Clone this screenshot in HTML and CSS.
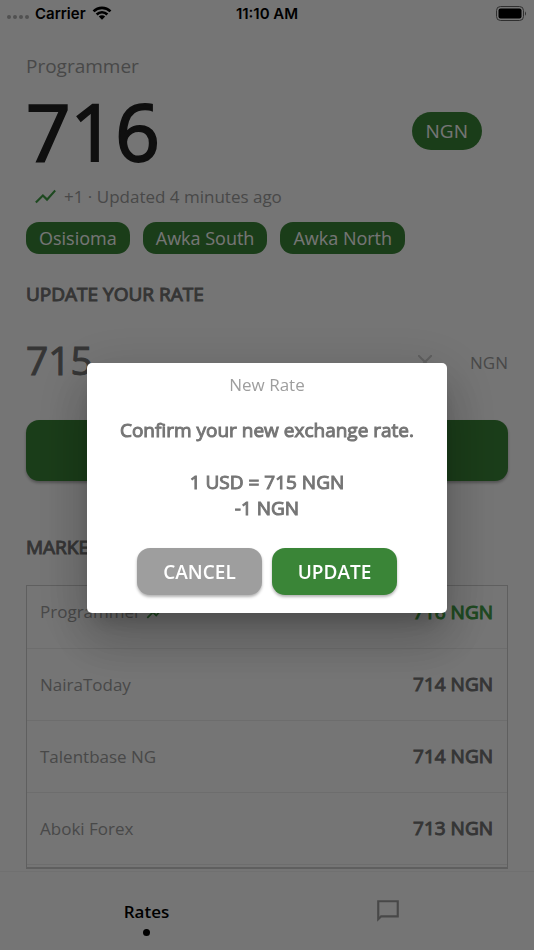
FILE: index.html
```html
<!DOCTYPE html>
<html lang="en">
<head>
    <meta charset="utf-8">
    <meta name="viewport" content="width=device-width, initial-scale=1">
    <title>Rates</title>
    <link rel="stylesheet" href="styles.css">
</head>
<body>
    <div class="app">
        <header class="status-bar">
            <div class="carrier">
                <svg class="signal" viewBox="0 0 22 4" aria-hidden="true">
                    <circle cx="2" cy="2" r="2"/>
                    <circle cx="8" cy="2" r="2"/>
                    <circle cx="14" cy="2" r="2"/>
                    <circle cx="20" cy="2" r="2"/>
                </svg>
                <span>Carrier</span>
                <svg class="wifi" viewBox="0 0 20 14" aria-hidden="true">
                    <path d="M0.6 4.4a13.4 13.4 0 0 1 18.8 0l-1.9 1.9a10.7 10.7 0 0 0-15 0z"/>
                    <path d="M3.7 7.5a9 9 0 0 1 12.6 0l-1.9 1.9a6.3 6.3 0 0 0-8.8 0z"/>
                    <path d="M6.8 10.6a4.6 4.6 0 0 1 6.4 0L10 13.8z"/>
                </svg>
            </div>
            <span>11:10 AM</span>
            <svg class="battery" viewBox="0 0 31 15" aria-hidden="true">
                <rect class="battery-case" x="0.5" y="0.5" width="27" height="14" rx="4"/>
                <rect x="2.5" y="2.5" width="23" height="10" rx="2"/>
                <path class="battery-tip" d="M29 5.2q2 2.3 0 4.6z"/>
            </svg>
        </header>

        <main>
            <section class="current">
                <p class="source">Programmer</p>
                <div class="rate-row">
                    <span class="rate">716</span>
                    <span class="currency-pill">NGN</span>
                </div>
                <p class="change">
                    <svg class="trend" viewBox="0 0 24 24" aria-hidden="true"><path d="M3.5 18.49l6-6.01 4 4L22 6.92l-1.41-1.41-7.09 7.97-4-4L2 16.99z"/></svg>
                    +1 · Updated 4 minutes ago
                </p>
                <div class="tags">
                    <span class="tag">Osisioma</span>
                    <span class="tag">Awka South</span>
                    <span class="tag">Awka North</span>
                </div>
            </section>

            <section class="update">
                <h2><label for="newRate">UPDATE YOUR RATE</label></h2>
                <div class="rate-field">
                    <input type="text" id="newRate" value="715">
                    <button class="clear" type="button" aria-label="Clear">
                        <svg viewBox="0 0 14 14"><path d="M0 0l14 14M14 0L0 14"/></svg>
                    </button>
                    <span>NGN</span>
                </div>
                <button class="submit" type="button">UPDATE</button>
            </section>

            <section class="market">
                <h2>MARKET RATES</h2>
                <div class="market-list">
                    <table>
                        <tr class="own">
                            <th scope="row">Programmer
                                <svg class="trend" viewBox="0 0 24 24" aria-hidden="true"><path d="M3.5 18.49l6-6.01 4 4L22 6.92l-1.41-1.41-7.09 7.97-4-4L2 16.99z"/></svg>
                            </th>
                            <td>716 NGN</td>
                        </tr>
                        <tr>
                            <th scope="row">NairaToday</th>
                            <td>714 NGN</td>
                        </tr>
                        <tr>
                            <th scope="row">Talentbase NG</th>
                            <td>714 NGN</td>
                        </tr>
                        <tr>
                            <th scope="row">Aboki Forex</th>
                            <td>713 NGN</td>
                        </tr>
                    </table>
                </div>
            </section>
        </main>

        <nav class="tabs">
            <a class="active" href="#rates">Rates</a>
            <a href="#chat" aria-label="Chat">
                <svg class="chat" viewBox="0 0 24 24"><path d="M22 2H2v20l4-4h16V2zM4 4h16v12H5.2L4 17.2z" fill-rule="evenodd"/></svg>
            </a>
        </nav>
    </div>

    <div class="overlay">
        <div class="dialog" role="dialog" aria-modal="true" aria-labelledby="dialogTitle">
            <h3 id="dialogTitle">New Rate</h3>
            <p>Confirm your new exchange rate.</p>
            <p>1 USD = 715 NGN<br>-1 NGN</p>
            <div class="actions">
                <button class="cancel" type="button">CANCEL</button>
                <button class="confirm" type="button">UPDATE</button>
            </div>
        </div>
    </div>
</body>
</html>
```

FILE: styles.css
```css
* {
    box-sizing: border-box;
}
body {
    margin: 0;
    font-family: "Open Sans", sans-serif;
    font-size: 19px;
    color: #757575;
    background-color: white;
}
h2, h3, p {
    margin: 0;
    font-weight: normal;
}
button {
    border: none;
    padding: 0;
    font: inherit;
    color: white;
    cursor: pointer;
}
/* slightly heavier than regular */
h2, td, .dialog p, .rate-field input {
    -webkit-text-stroke: 1px;
}
.app {
    display: flex;
    flex-direction: column;
    height: 100vh;
}

/* status bar */
.status-bar {
    display: grid;
    grid-template-columns: 1fr auto 1fr;
    align-items: center;
    height: 26px;
    padding: 0 7px;
    font-family: Inter, sans-serif;
    font-size: 15px;
    font-weight: 600;
    color: black;
}
.carrier {
    display: flex;
    align-items: center;
    gap: 6px;
}
.signal {
    width: 22px;
    height: 4px;
    margin-top: 8px;
    fill: #b0b0b0;
}
.wifi {
    width: 20px;
    height: 14px;
}
.battery {
    width: 31px;
    height: 15px;
    justify-self: end;
}
.battery-case {
    fill: none;
    stroke: #666;
}
.battery-tip {
    fill: #666;
}

main {
    flex: 1;
    display: flex;
    flex-direction: column;
    min-height: 0;
    padding: 24px 26px 2px;
}

/* current rate */
.source {
    line-height: 32px;
    color: #9e9e9e;
}
.rate-row {
    display: flex;
    justify-content: space-between;
    align-items: center;
    height: 98px;
    padding-right: 26px;
}
.rate {
    font-size: 78px;
    line-height: 98px;
    color: #212121;
    -webkit-text-stroke: 2px;
}
.currency-pill {
    padding: 0 14px;
    border-radius: 20px;
    line-height: 38px;
    color: white;
    background-color: #3a8537;
}
.change {
    display: flex;
    align-items: center;
    gap: 6px;
    height: 32px;
    padding-left: 7px;
    font-size: 17px;
    color: #9e9e9e;
}
.trend {
    width: 25px;
    height: 25px;
    fill: #43a047;
}
.tags {
    display: flex;
    gap: 13px;
    margin-top: 10px;
}
.tag {
    padding: 0 13px;
    border-radius: 13px;
    font-size: 18px;
    line-height: 32px;
    color: white;
    background-color: #3a8537;
}

/* update form */
h2 {
    font-size: 19px;
    line-height: 28px;
}
.update {
    margin-top: 26px;
}
.rate-field {
    display: flex;
    align-items: center;
    height: 60px;
    margin-top: 24px;
    font-size: 17px;
    color: #9e9e9e;
}
.rate-field input {
    flex: 1;
    min-width: 0;
    border: none;
    padding: 0 0 6px;
    outline: none;
    font: 39px "Open Sans", sans-serif;
    color: #757575;
    background: none;
}
.clear {
    width: 14px;
    height: 14px;
    margin-right: 38px;
    background: none;
}
.clear svg {
    display: block;
    fill: none;
    stroke: #d0d0d0;
    stroke-width: 2;
}
.submit {
    display: block;
    width: 100%;
    height: 61px;
    margin-top: 28px;
    border-radius: 13px;
    background-color: #3a8537;
    box-shadow: 0 2px 3px rgba(0,0,0,0.3);
}

/* market rates */
.market {
    flex: 1;
    display: flex;
    flex-direction: column;
    min-height: 0;
    margin-top: 52px;
}
.market-list {
    flex: 1;
    min-height: 0;
    margin-top: 24px;
    overflow: hidden;
    border: 1px solid #d0d0d0;
    border-bottom-width: 2px;
}
table {
    width: 100%;
    margin-top: -10px;
    border-collapse: collapse;
}
tr {
    height: 72px;
    border-bottom: 1px solid #ededed;
}
th, td {
    padding: 0 14px 0 13px;
}
th {
    font-size: 17px;
    font-weight: normal;
    text-align: left;
    color: #9e9e9e;
}
th .trend {
    width: 20px;
    height: 20px;
    vertical-align: middle;
}
td {
    text-align: right;
}
.own td {
    color: #43a047;
}

/* bottom tabs */
.tabs {
    display: flex;
    justify-content: center;
    height: 79px;
    border-top: 1px solid #f4f4f4;
}
.tabs a {
    display: flex;
    flex-direction: column;
    align-items: center;
    width: 241px;
    padding-top: 26px;
    font-size: 17px;
    line-height: 28px;
    color: #9e9e9e;
    text-decoration: none;
}
.tabs .active {
    font-weight: 600;
    color: black;
}
.active::after {
    content: "";
    width: 7px;
    height: 7px;
    margin-top: 3px;
    border-radius: 50%;
    background-color: black;
}
.chat {
    width: 26px;
    height: 26px;
    fill: #9e9e9e;
}

/* confirm dialog */
.overlay {
    position: fixed;
    inset: 0;
    display: flex;
    justify-content: center;
    align-items: center;
    padding-top: 26px;
    background-color: rgba(0,0,0,0.54);
}
.dialog {
    width: 360px;
    padding: 8px 13px 18px;
    border-radius: 5px;
    text-align: center;
    background-color: white;
    box-shadow: 0 14px 20px -8px rgba(0,0,0,0.2), 0 30px 48px 4px rgba(0,0,0,0.14), 0 12px 58px 10px rgba(0,0,0,0.12);
}
.dialog h3 {
    font-size: 17px;
    line-height: 28px;
    color: #9e9e9e;
}
.dialog p {
    margin-top: 18px;
    line-height: 26px;
}
.dialog p + p {
    margin-top: 26px;
}
.actions {
    display: flex;
    justify-content: center;
    gap: 10px;
    margin-top: 27px;
}
.actions button {
    width: 125px;
    height: 47px;
    border-radius: 13px;
    font-weight: 600;
    box-shadow: 0 2px 3px rgba(0,0,0,0.3);
}
.cancel {
    background-color: #9e9e9e;
}
.confirm {
    background-color: #3a8537;
}
```
